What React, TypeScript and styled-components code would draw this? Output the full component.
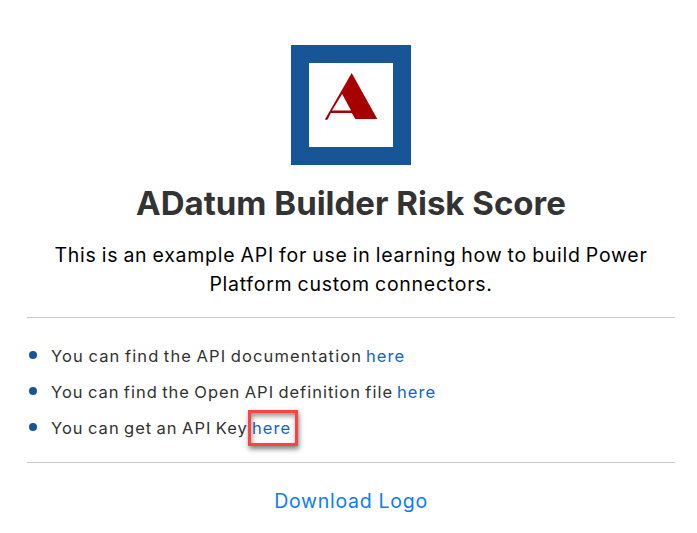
import React from "react";
import styled, { createGlobalStyle } from "styled-components";

const GlobalStyle = createGlobalStyle`
  *, *::before, *::after { box-sizing: border-box; }
  body {
    margin: 0;
    background: #fff;
    color: #323130;
    font-family: Inter, "Open Sans", sans-serif;
    overflow: hidden;
  }
`;

const Page = styled.main`
  display: flex;
  flex-direction: column;
  width: 648px;
  margin-left: 27px;
  padding-top: 45px;
`;

const Logo = styled.svg`
  display: block;
  align-self: center;
  width: 120px;
  height: 120px;
`;

const Title = styled.h1`
  margin: 18px 0 0;
  text-align: center;
  font-size: 33px;
  font-weight: 700;
  line-height: 40px;
  color: #333;
  white-space: nowrap;
`;

const Intro = styled.p`
  display: flex;
  flex-direction: column;
  align-items: center;
  margin: 18px 0;
  font-size: 19.5px;
  line-height: 29px;
  color: #000;
`;

const Run = styled.span<{ $tracking: number; $wordGap?: number }>`
  letter-spacing: ${(p) => p.$tracking}px;
  word-spacing: ${(p) => p.$wordGap ?? 0}px;
  white-space: pre;
`;

const Rule = styled.hr`
  width: 100%;
  height: 1px;
  margin: 0;
  border: 0;
  background: #c8c8c8;
`;

const Links = styled.ul`
  margin: 0;
  padding: 20px 0 16px;
  list-style: none;
  font-size: 16.5px;
  line-height: 36px;
`;

const LinkItem = styled.li`
  display: flex;
  align-items: center;
  height: 36px;

  &::before {
    content: "";
    width: 8px;
    height: 8px;
    margin: 0 14px 2px 2px;
    border-radius: 50%;
    background: #185596;
  }
`;

const EntryText = styled(Run)<{ $width: number }>`
  width: ${(p) => p.$width}px;
`;

const Anchor = styled.a`
  position: relative;
  margin-left: 4px;
  color: #1263cc;
  letter-spacing: 1.1px;
  text-decoration: none;
`;

const Highlight = styled.span`
  position: absolute;
  left: -4px;
  top: 0;
  width: 50px;
  height: 36px;
  border: 3px solid #fa4343;
  box-shadow: 1px 3px 5px rgba(0, 0, 0, 0.5), inset 1px 3px 5px rgba(0, 0, 0, 0.42);
`;

const Download = styled.a`
  align-self: center;
  margin-top: 23px;
  font-size: 19.5px;
  line-height: 30px;
  color: #0d7bff;
  text-decoration: none;
`;

const entries = [
  { text: "You can find the API documentation", tracking: 1.13, width: 311 },
  { text: "You can find the Open API definition file", tracking: 1.0, width: 342 },
  { text: "You can get an API Key", tracking: 1.02, width: 197, marked: true },
];

export default function App() {
  return (
    <>
      <GlobalStyle />
      <Page>
        <Logo viewBox="0 0 120 120" role="img" aria-label="ADatum">
          <path fill="#185596" d="M0 0h120v120H0z" />
          <path fill="#fff" d="M18 18h84v84H18z" />
          <path
            fill="#a70000"
            fillRule="evenodd"
            d="M60.7 28L86.3 74H64.3L60.8 68H39.8L36.6 74.5Q35 75.4 34 74.3ZM51.2 49L41 65.6H60Z"
          />
        </Logo>
        <Title>ADatum Builder Risk Score</Title>
        <Intro>
          <Run $tracking={0.73} $wordGap={-1}>
            This is an example API for use in learning how to build Power
          </Run>
          <Run $tracking={0.73} $wordGap={-1}>Platform custom connectors.</Run>
        </Intro>
        <Rule />
        <Links>
          {entries.map((e) => (
            <LinkItem key={e.text}>
              <EntryText $tracking={e.tracking} $wordGap={-1.3} $width={e.width}>
                {e.text}
              </EntryText>
              <Anchor href="#">
                here
                {e.marked && <Highlight />}
              </Anchor>
            </LinkItem>
          ))}
        </Links>
        <Rule />
        <Download href="#">
          <Run $tracking={0.73}>Download Logo</Run>
        </Download>
      </Page>
    </>
  );
}
